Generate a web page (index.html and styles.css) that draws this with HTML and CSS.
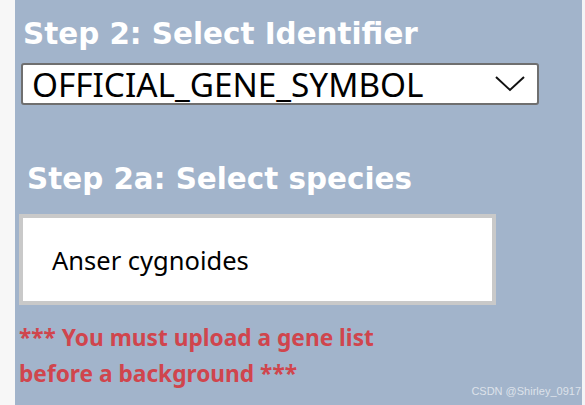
FILE: index.html
```html
<!DOCTYPE html>
<html lang="en">
<head>
    <meta charset="UTF-8">
    <title>Step 2 - Select Identifier</title>
    <link rel="stylesheet" href="styles.css">
</head>
<body>
    <div class="page">
        <div class="gutter"></div>

        <!-- Identifier / species panel -->
        <div class="panel">
            <h2 class="step-title">Step 2: Select Identifier</h2>
            <div class="select-box">
                <span class="select-value">OFFICIAL_GENE_SYMBOL</span>
                <svg class="chevron" width="30" height="16" viewBox="0 0 30 16">
                    <path d="M1 1 L15 14 L29 1" fill="none" stroke="#111" stroke-width="2"/>
                </svg>
            </div>

            <h2 class="step-title sub">Step 2a: Select species</h2>
            <div class="species-box">
                <span class="species-item">Anser cygnoides</span>
            </div>

            <p class="warning">*** You must upload a gene list before a background ***</p>
        </div>

        <div class="edge"></div>
        <div class="watermark">CSDN @Shirley_0917</div>
    </div>
</body>
</html>
```

FILE: styles.css
```css
/* Reset */
* {
    box-sizing: border-box;
    margin: 0;
    padding: 0;
}

body {
    width: 585px;
    height: 405px;
    overflow: hidden;
    background-color: #f7f7f7;
}

.page {
    display: flex;
    height: 405px;
    position: relative;
}

.gutter {
    width: 15px;
    background-color: #f7f7f7;
}

.edge {
    width: 3px;
    background-color: #f3f4f6;
}

/* Main panel */
.panel {
    flex: 1;
    background-color: #a2b4cb;
    padding: 17px 0 0 4px;
}

.step-title {
    font-family: 'DejaVu Sans', Verdana, sans-serif;
    font-size: 29.4px;
    line-height: 34px;
    font-weight: bold;
    color: #ffffff;
    margin-left: 4px;
}

.step-title.sub {
    margin: 57px 0 0 8px;
}

/* Identifier dropdown */
.select-box {
    width: 518px;
    height: 42px;
    margin: 12px 0 0 2px;
    background-color: #ffffff;
    border: 2px solid #6f6f6f;
    border-radius: 3px;
    display: flex;
    align-items: center;
    justify-content: space-between;
    padding: 0 12px 0 9px;
}

.select-value {
    font-family: 'Noto Sans', 'Open Sans', sans-serif;
    font-size: 33.3px;
    line-height: 38px;
    color: #000000;
}

.chevron {
    display: block;
}

/* Species list */
.species-box {
    width: 477px;
    height: 91px;
    margin: 18px 0 0 0;
    background-color: #ffffff;
    border: 4px solid #c9c9c9;
    display: flex;
    align-items: center;
    padding-left: 29px;
}

.species-item {
    font-family: 'Noto Sans', 'Open Sans', sans-serif;
    font-size: 25.5px;
    color: #000000;
}

/* Warning text */
.warning {
    font-family: 'Noto Sans', 'Open Sans', sans-serif;
    font-size: 22.7px;
    font-weight: bold;
    line-height: 36px;
    color: #d0454d;
    width: 420px;
    margin-top: 15px;
}

.watermark {
    position: absolute;
    right: 4px;
    bottom: 8px;
    font-family: 'Liberation Sans', Arial, sans-serif;
    font-size: 11px;
    color: #dde2ea;
}
```
